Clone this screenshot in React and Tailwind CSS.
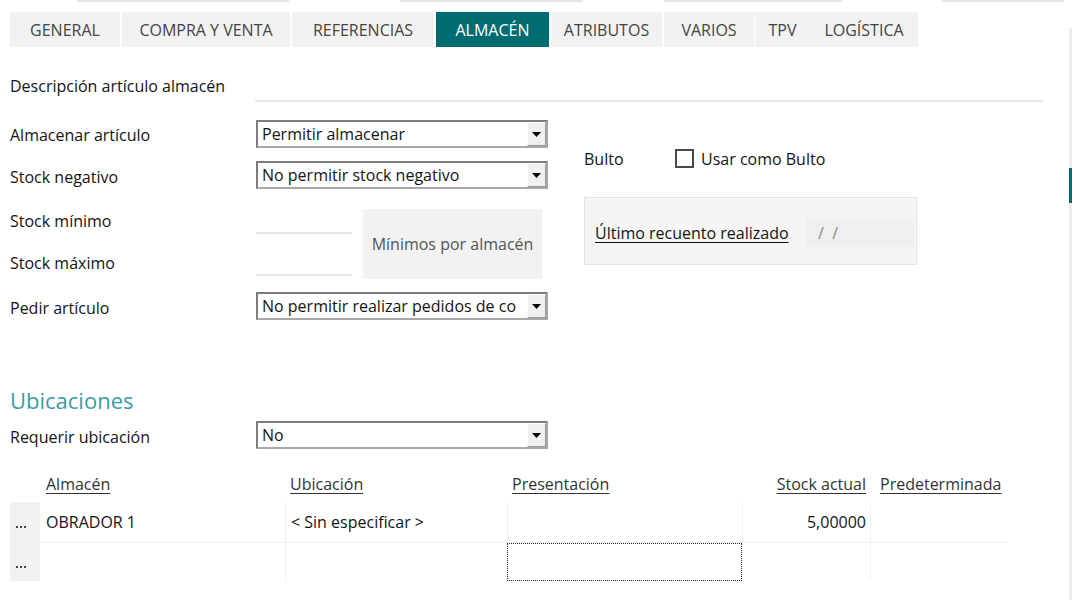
import React from 'react';

const TABS = [
  { label: 'GENERAL', w: 'w-[110px]' },
  { label: 'COMPRA Y VENTA', w: 'w-[168px]' },
  { label: 'REFERENCIAS', w: 'w-[142px]' },
  { label: 'ALMACÉN', w: 'w-[113px]', active: true },
  { label: 'ATRIBUTOS', w: 'w-[111px]' },
  { label: 'VARIOS', w: 'w-[90px]' },
  { label: 'TPV', w: 'w-[55px] ml-[-1px]' },
  { label: 'LOGÍSTICA', w: 'w-[108px] ml-[-2px]' },
];

function Select({ value }) {
  return (
    <div className="flex h-[28px] w-[292px] border-2 border-t-[#7d7d7d] border-l-[#7d7d7d] border-r-[#a8a8a8] border-b-[#a8a8a8] bg-white">
      <div className="flex-1 whitespace-nowrap pl-[4px] leading-[24px]">{value}</div>
      <div className="flex w-[19px] items-center justify-center border border-t-white border-l-white border-r-[#9a9a9a] border-b-[#9a9a9a] bg-[#f0f0f0]">
        <svg width="9" height="5" viewBox="0 0 9 5">
          <path d="M0 0h9L4.5 5z" fill="#000" />
        </svg>
      </div>
    </div>
  );
}

function Dots() {
  return (
    <div className="flex gap-[2px]">
      <div className="h-[2px] w-[2px] bg-[#444]" />
      <div className="h-[2px] w-[2px] bg-[#444]" />
      <div className="h-[2px] w-[2px] bg-[#444]" />
    </div>
  );
}

export default function App() {
  return (
    <div className="relative h-[600px] w-[1072px] overflow-hidden bg-white font-['Open_Sans',sans-serif] text-[16px] text-[#141414]">
      {/* restos de campos superiores */}
      <div className="flex h-[2px]">
        <div className="ml-[77px] w-[212px] bg-[#e4e4e4]" />
        <div className="ml-[111px] w-[183px] bg-[#e4e4e4]" />
        <div className="ml-[81px] w-[178px] bg-[#e4e4e4]" />
        <div className="ml-[100px] w-[122px] bg-[#e4e4e4]" />
      </div>

      {/* pestañas */}
      <div className="ml-[10px] mt-[10px] flex h-[35px] gap-[2px]">
        {TABS.map((t) => (
          <div
            key={t.label}
            className={`${t.w} flex items-center justify-center text-[16px] ${t.active ? 'bg-[#006b70] text-white' : 'bg-[#f2f2f2] text-[#444]'}`}
          >
            {t.label}
          </div>
        ))}
      </div>

      {/* descripción */}
      <div className="mt-[23px] flex h-[32px]">
        <div className="flex w-[255px] items-center pl-[10px]">Descripción artículo almacén</div>
        <div className="w-[788px] border-b-2 border-[#e6e6e6]" />
      </div>

      {/* bloque principal */}
      <div className="mt-[18px] flex">
        <div className="w-[548px] pl-[10px]">
          <div className="flex h-[28px] items-center">
            <div className="w-[246px] pt-[2px]">Almacenar artículo</div>
            <Select value="Permitir almacenar" />
          </div>
          <div className="mt-[13px] flex h-[28px] items-center">
            <div className="w-[246px] pt-[4px]">Stock negativo</div>
            <Select value="No permitir stock negativo" />
          </div>
          <div className="mt-[11px] flex">
            <div className="w-[246px]">
              <div className="flex h-[42px] items-center">Stock mínimo</div>
              <div className="flex h-[42px] items-center">Stock máximo</div>
            </div>
            <div className="w-[96px]">
              <div className="h-[34px] border-b-2 border-[#e6e6e6]" />
              <div className="mt-[8px] h-[34px] border-b-2 border-[#e6e6e6]" />
            </div>
            <div className="ml-[11px] mt-[9px] flex h-[70px] w-[179px] items-center justify-center bg-[#f2f2f2] text-[#555]">
              Mínimos por almacén
            </div>
          </div>
          <div className="mt-[8px] flex h-[28px] items-center">
            <div className="w-[246px] pt-[4px]">Pedir artículo</div>
            <Select value="No permitir realizar pedidos de co" />
          </div>
        </div>

        <div className="ml-[36px]">
          <div className="mt-[29px] flex h-[19px] items-center">
            <div className="w-[91px]">Bulto</div>
            <div className="h-[19px] w-[19px] border-2 border-[#4a4a4a] bg-white" />
            <div className="ml-[7px]">Usar como Bulto</div>
          </div>
          <div className="mt-[29px] flex h-[68px] w-[333px] items-center border border-[#e2e2e2] bg-[#f5f5f5] pt-[4px]">
            <div className="pl-[10px] underline underline-offset-[3px]">Último recuento realizado</div>
            <div className="ml-auto mr-[2px] flex h-[28px] w-[108px] items-center bg-[#efefef] pl-[12px] text-[#888]">/ &nbsp;/</div>
          </div>
        </div>
      </div>

      {/* ubicaciones */}
      <div className="ml-[10px] mt-[66px] h-[28px] text-[22px] leading-[28px] text-[#3a9ca4]">Ubicaciones</div>
      <div className="ml-[10px] mt-[7px] flex h-[28px] items-center">
        <div className="w-[246px] pt-[4px]">Requerir ubicación</div>
        <Select value="No" />
      </div>

      {/* tabla */}
      <div className="ml-[10px] mt-[23px] grid h-[24px] grid-cols-[30px_245px_222px_235px_128px_138px] items-center text-[#333]">
        <div />
        <div className="pl-[6px]"><span className="underline underline-offset-[3px]">Almacén</span></div>
        <div className="pl-[5px]"><span className="underline underline-offset-[3px]">Ubicación</span></div>
        <div className="pl-[5px]"><span className="underline underline-offset-[3px]">Presentación</span></div>
        <div className="pr-[4px] text-right"><span className="underline underline-offset-[3px]">Stock actual</span></div>
        <div className="whitespace-nowrap pl-[10px]"><span className="underline underline-offset-[3px]">Predeterminada</span></div>
      </div>
      <div className="ml-[10px] mt-[6px] grid grid-cols-[30px_245px_222px_235px_128px_138px]">
        <div className="flex h-[41px] items-center bg-[#f2f2f2] pl-[6px] pt-[8px]"><Dots /></div>
        <div className="flex h-[41px] items-center border-b border-[#efefef] pl-[6px]">OBRADOR 1</div>
        <div className="flex h-[41px] items-center border-b border-l border-[#efefef] pl-[5px]">&lt; Sin especificar &gt;</div>
        <div className="h-[41px] border-b border-l border-[#efefef]" />
        <div className="flex h-[41px] items-center justify-end border-b border-l border-[#efefef] pr-[4px]">5,00000</div>
        <div className="h-[41px] border-b border-l border-[#efefef]" />

        <div className="flex h-[38px] items-center bg-[#f2f2f2] pl-[6px] pt-[10px]"><Dots /></div>
        <div className="h-[38px]" />
        <div className="h-[38px] border-l border-[#efefef]" />
        <div className="h-[38px] border border-dotted border-[#222]" />
        <div className="h-[38px] border-[#efefef]" />
        <div className="h-[38px] border-l border-[#efefef]" />
      </div>

      {/* barra de desplazamiento */}
      <div className="absolute bottom-0 right-0 top-[28px] w-[3px] bg-[#ededed]">
        <div className="mt-[140px] h-[35px] w-[3px] bg-[#006b70]" />
      </div>
    </div>
  );
}
